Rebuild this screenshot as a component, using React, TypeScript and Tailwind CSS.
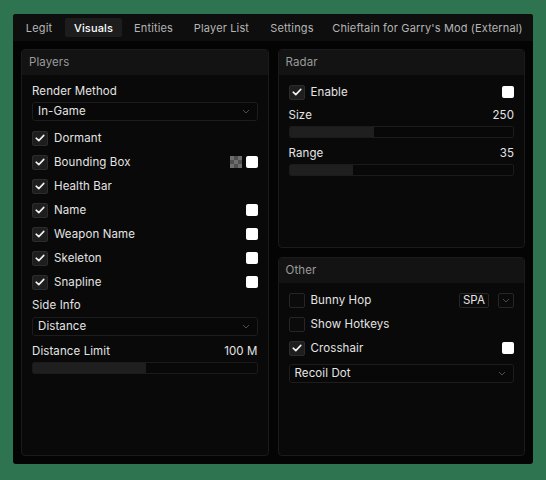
import React from 'react';

const font = { fontFamily: 'Inter, "Noto Sans", sans-serif' };

const Check: React.FC = () => (
  <svg width="10" height="8" viewBox="0 0 10 8" fill="none">
    <path d="M1.2 4.2 L3.8 6.6 L8.8 1.4" stroke="#f2f2f2" strokeWidth="1.6" strokeLinecap="round" strokeLinejoin="round" />
  </svg>
);

const Chevron: React.FC = () => (
  <svg width="8" height="5" viewBox="0 0 8 5" fill="none">
    <path d="M1 1 L4 4 L7 1" stroke="#4d4d4d" strokeWidth="1" />
  </svg>
);

const Swatch: React.FC = () => <div className="w-[12px] h-[12px] rounded-[2px] bg-white" />;

const Checker: React.FC = () => (
  <div className="w-[12px] h-[12px] grid grid-cols-3">
    {[0, 1, 2, 3, 4, 5, 6, 7, 8].map((i) => (
      <div key={i} className={i % 2 === 0 ? 'bg-[#6e6e6e]' : 'bg-[#4f4f4f]'} />
    ))}
  </div>
);

interface RowProps {
  label: string;
  checked?: boolean;
  right?: React.ReactNode;
}

const CheckRow: React.FC<RowProps> = ({ label, checked = true, right }) => (
  <div className="h-[24px] flex items-center">
    <div
      className={`w-[16px] h-[15px] rounded-[2px] border flex items-center justify-center ${
        checked ? 'bg-[#1e1e1e] border-[#2c2c2c]' : 'bg-[#0b0b0b] border-[#262626]'
      }`}
    >
      {checked && <Check />}
    </div>
    <span className="ml-[6px] pt-[2px] text-[#e4e4e4]">{label}</span>
    <div className="ml-auto flex items-center gap-[4px]">{right}</div>
  </div>
);

const Dropdown: React.FC<{ value: string; className?: string }> = ({ value, className = '' }) => (
  <div className={`h-[19px] flex items-center justify-between pl-[5px] pr-[7px] rounded-[3px] border border-[#1d1d1d] bg-[#080808] text-[#e4e4e4] ${className}`}>
    <span className="pt-[1px]">{value}</span>
    <Chevron />
  </div>
);

const Slider: React.FC<{ pct: number; className?: string }> = ({ pct, className = '' }) => (
  <div className={`h-[12px] rounded-[2px] border border-[#1b1b1b] bg-[#080808] overflow-hidden ${className}`}>
    <div className="h-full bg-[#1f1f1f]" style={{ width: `${pct}%` }} />
  </div>
);

const LabelRow: React.FC<{ label: string; value?: string; className?: string }> = ({ label, value, className = '' }) => (
  <div className={`h-[16px] flex items-center justify-between pt-[2px] text-[#e4e4e4] ${className}`}>
    <span>{label}</span>
    {value && <span>{value}</span>}
  </div>
);

const Panel: React.FC<{ title: string; className?: string; children: React.ReactNode }> = ({ title, className = '', children }) => (
  <div className={`rounded-[4px] border border-[#1b1b1b] bg-[#090909] flex flex-col overflow-hidden ${className}`}>
    <div className="h-[25px] shrink-0 bg-[#131313] flex items-center px-[7px] pt-[1px] text-[#9a9a9a]">{title}</div>
    <div className="px-[10px] flex flex-col">{children}</div>
  </div>
);

const tabs = [
  { label: 'Legit', w: 'w-[44px]' },
  { label: 'Visuals', w: 'w-[57px]' },
  { label: 'Entities', w: 'w-[55px]' },
  { label: 'Player List', w: 'w-[73px]' },
  { label: 'Settings', w: 'w-[60px]' },
  { label: "Chieftain for Garry's Mod (External)", w: 'w-[203px]' },
];

export default function App() {
  return (
    <div className="w-[546px] h-[480px] bg-[#2f7450] pt-[14px] pl-[13px] text-[11.5px] tracking-[0.1px]" style={font}>
      <div className="w-[520px] h-[450px] rounded-[3px] bg-[#040404] flex flex-col overflow-hidden">
        <div className="h-[27px] shrink-0 bg-[#0e0e0e] flex items-center pl-[4px] gap-[4px] text-[11px] tracking-[0.15px]">
          {tabs.map((t) => (
            <div
              key={t.label}
              className={`h-[19px] ${t.w} shrink-0 pt-[2px] flex items-center justify-center rounded-[2px] whitespace-nowrap ${
                t.label === 'Visuals' ? 'bg-[#1d1d1d] text-white font-medium' : 'text-[#b5b5b5]'
              }`}
            >
              {t.label}
            </div>
          ))}
        </div>
        <div className="flex-1 grid grid-cols-2 gap-[9px] p-[8px]">
          <Panel title="Players">
            <LabelRow label="Render Method" className="mt-[8px]" />
            <Dropdown value="In-Game" className="mt-[3px]" />
            <div className="mt-[5px] flex flex-col">
              <CheckRow label="Dormant" />
              <CheckRow label="Bounding Box" right={<><Checker /><Swatch /></>} />
              <CheckRow label="Health Bar" />
              <CheckRow label="Name" right={<Swatch />} />
              <CheckRow label="Weapon Name" right={<Swatch />} />
              <CheckRow label="Skeleton" right={<Swatch />} />
              <CheckRow label="Snapline" right={<Swatch />} />
            </div>
            <LabelRow label="Side Info" className="mt-[3px]" />
            <Dropdown value="Distance" className="mt-[4px]" />
            <LabelRow label="Distance Limit" value="100 M" className="mt-[7px]" />
            <Slider pct={50.4} className="mt-[3px]" />
          </Panel>
          <div className="flex flex-col gap-[9px]">
            <Panel title="Radar" className="h-[199px]">
              <div className="mt-[5px]">
                <CheckRow label="Enable" right={<Swatch />} />
              </div>
              <LabelRow label="Size" value="250" className="mt-[3px]" />
              <Slider pct={38} className="mt-[3px]" />
              <LabelRow label="Range" value="35" className="mt-[7px]" />
              <Slider pct={28.5} className="mt-[3px]" />
            </Panel>
            <Panel title="Other" className="flex-1">
              <div className="mt-[5px] flex flex-col">
                <CheckRow
                  label="Bunny Hop"
                  checked={false}
                  right={
                    <>
                      <div className="h-[15px] px-[3px] pt-[1px] flex items-center rounded-[2px] border border-[#262626] bg-[#0a0a0a] text-[#e4e4e4]">SPA</div>
                      <div className="ml-[5px] w-[16px] h-[15px] flex items-center justify-center rounded-[2px] border border-[#262626] bg-[#0a0a0a]">
                        <Chevron />
                      </div>
                    </>
                  }
                />
                <CheckRow label="Show Hotkeys" checked={false} />
                <CheckRow label="Crosshair" right={<Swatch />} />
              </div>
              <Dropdown value="Recoil Dot" className="mt-[4px]" />
            </Panel>
          </div>
        </div>
      </div>
    </div>
  );
}
